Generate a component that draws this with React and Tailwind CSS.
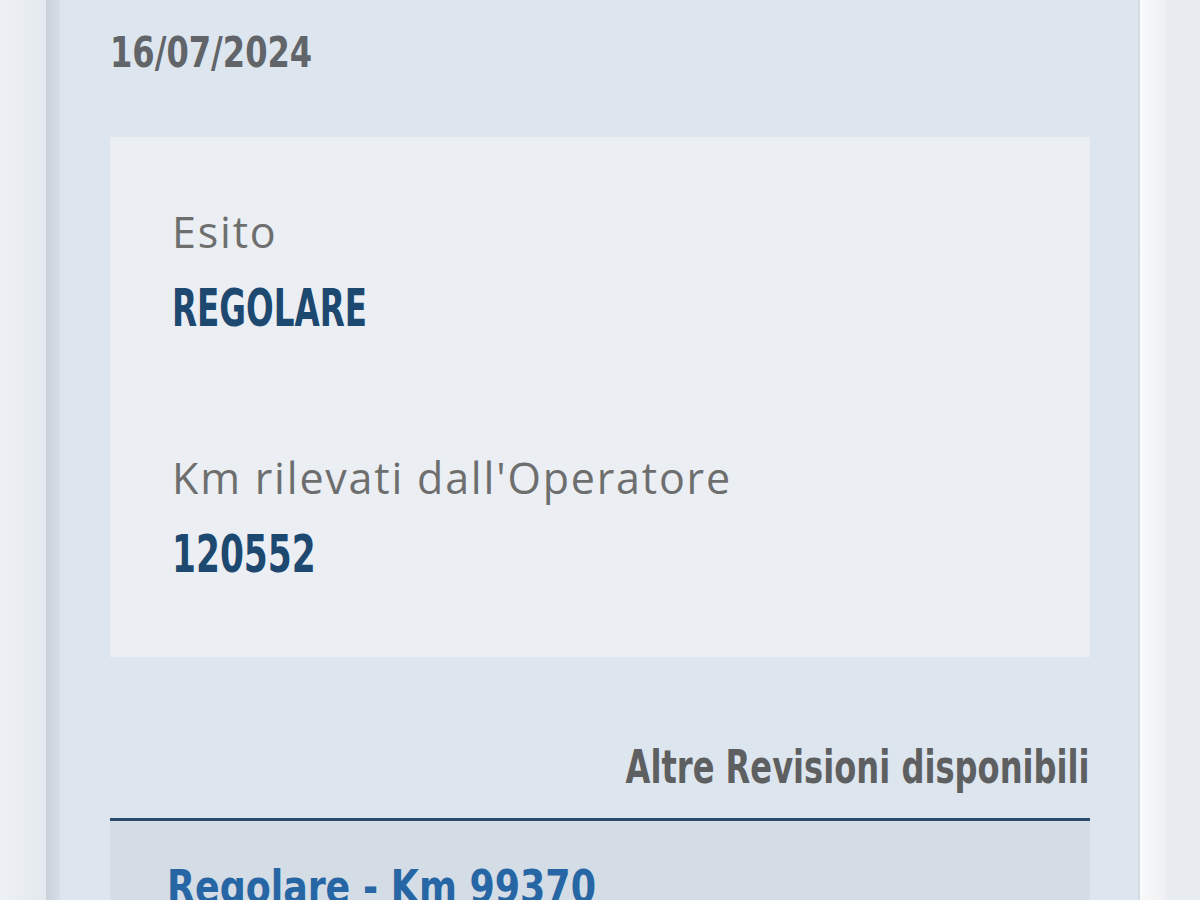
import React from 'react';

const narrow = { fontFamily: '"DejaVu Sans Condensed", "Liberation Sans", sans-serif' };
const plain = { fontFamily: '"Open Sans", "Noto Sans", sans-serif' };

const Field = ({ label, value, squeeze }) => (
    <div className="flex flex-col items-start">
        <span className="text-[43px] leading-[50px] text-[#6e6e6e] tracking-[1.8px]" style={plain}>{label}</span>
        <span className={`mt-[25px] inline-block origin-left ${squeeze} text-[51px] leading-[54px] font-bold text-[#1d4870]`} style={narrow}>{value}</span>
    </div>
);

export default function App() {
    return (
        <div className="w-[1200px] h-[900px] overflow-hidden bg-[#ebeef2] flex">
            {/* left gutter + shadow */}
            <div className="w-[46px] shrink-0 bg-gradient-to-r from-[#edf0f4] to-[#e4e9ef]"></div>
            <div className="w-[14px] shrink-0 bg-gradient-to-r from-[#c9d1db] to-[#d6dee7]"></div>

            {/* card */}
            <div className="w-[1078px] shrink-0 bg-[#dde5ee] pl-[50px] pr-[48px] pt-[28px] flex flex-col">
                <div className="shrink-0 self-start inline-block origin-left scale-x-[0.83] text-[43px] leading-[48px] font-bold text-[#616468]" style={narrow}>16/07/2024</div>

                <div className="shrink-0 mt-[61px] h-[520px] bg-[#ebeff4] pl-[62px] pt-[70px] flex flex-col">
                    <Field label="Esito" value="REGOLARE" squeeze="scale-x-[0.71]" />
                    <div className="mt-[117px]">
                        <Field label="Km rilevati dall'Operatore" value="120552" squeeze="scale-x-[0.75]" />
                    </div>
                </div>

                <div className="shrink-0 mt-[84px] self-end inline-block origin-right scale-x-[0.76] text-[47px] leading-[52px] font-bold text-[#5d5f61]" style={narrow}>
                    Altre Revisioni disponibili
                </div>

                <div className="shrink-0 mt-[25px] border-t-[3px] border-[#2b4a6d] bg-[#d4dce5] pl-[57px] pt-[40px] h-[200px]">
                    <span className="inline-block origin-left scale-x-[0.86] text-[47px] leading-[52px] font-bold text-[#2766a4]" style={narrow}>Regolare - Km 99370</span>
                </div>
            </div>

            {/* right edge */}
            <div className="w-[2px] shrink-0 bg-[#d3dbe4]"></div>
            <div className="w-[26px] shrink-0 bg-gradient-to-r from-[#f9fafb] to-[#eef0f3]"></div>
            <div className="flex-1 bg-[#e9edf2]"></div>
        </div>
    );
}
